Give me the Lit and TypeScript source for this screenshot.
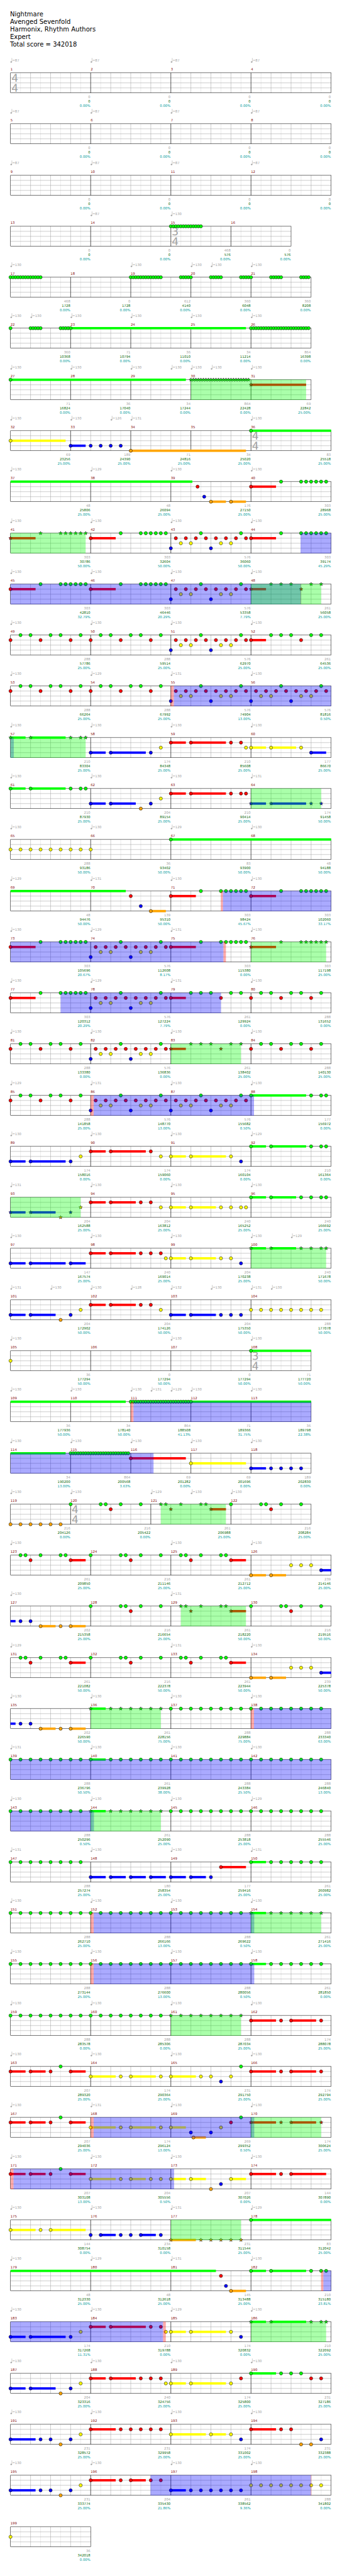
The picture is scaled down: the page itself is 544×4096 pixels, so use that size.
import { LitElement, html, svg, css, type SVGTemplateResult } from "lit";
import { customElement, property } from "lit/decorators.js";

/* ---------- chart notation ----------
 * Time is counted in eighths of a beat.
 * Measure: "[n/d] base total percent notes..."
 * Notes:   lane letter (G R Y B O), then comma-separated positions.
 *          lower case = star-power note, "=" in front = held tail only,
 *          "p~len" = sustain, "a:b:step" = a run of notes.
 */
const A = "R0~10 G12,20,22,24,26,28,30";
const B = "B0,16 Y4,8,20,24 R2:30:4 G12,28";
const C = "R0~6,20 G8,12,16,24,28";
const D = "R0,12,24 G4,8,16,20,28";
const E = "G0,12,14,20,28 R16";
const F = "G4,6,12,20,22 R8,24~6";
const H = "G0:28:4";
const I = "G0~6,8:28:4";
const J = "R0~10,12,16~10,28";
const K = "R0~6,8~6,16,24~6 G20";
const TREM = "G0,8:12,20:23";
const BLUE_RUN = "B0~6,8,12,16,20";
const star = (s: string) => s.toLowerCase();

interface Line {
  tempos: string;
  shades?: string;
  bars: string[];
}
const L = (tempos: string, shades: string, ...bars: string[]): Line => ({ tempos, shades, bars });

const EMPTY = "0 0 0.00";
const CHART: Line[] = [
  L("87 87 87 87", "", "4/4 " + EMPTY, EMPTY, EMPTY, EMPTY),
  L("87 87 87 87", "", EMPTY, EMPTY, EMPTY, EMPTY),
  L("87 87 87 87", "", EMPTY, EMPTY, EMPTY, EMPTY),
  L("- 87 130 -", "", EMPTY, EMPTY, "3/4 468 576 0.00 G0:12", "0 576 0.00"),
  L("130 - 130 130 130@80 130", "", "468 1728 0.00 G0:12", "0 1728 0.00", "612 4140 0.00 G0:12,20:23", `360 6048 0.00 ${TREM}`, `360 8208 0.00 ${TREM}`),
  L("130 130@8 130 130 130 130", "", `360 10368 0.00 ${TREM}`, "71 10794 0.00 G0~70", "36 11010 0.00", "34 11214 0.00", "864 16398 0.00 G0:23"),
  L("130 130 130 130@64 130 130@80 130", "g72-118", "71 16824 0.00 G0~70", "36 17040 0.00", "34 17244 0.00", "864 22428 0.00 g0:23", "69 22842 25.00 r0~22"),
  L("130 130 126@40 131 - 130", "", "69 23256 25.00 Y0~22", `189 24390 25.00 ${BLUE_RUN}`, "71 24816 25.00 O0~46", "34 25020 25.00", "4/4 83 25518 25.00 G0~32"),
  L("130 129 130 130", "", "48 25806 25.00 =G0~72.6", "48 26094 25.00", "176 27150 25.00 R10.67 B13.33 O16~6,24~6", `303 28968 25.00 ${A}`),
  L("130 130 130 130", "g0-30 b115.8-128", `303 30786 50.00 ${star(A)}`, `303 32604 50.00 ${A}`, `576 36060 50.00 ${B}`, `303 39174 45.29 ${A}`),
  L("130 130 130 130", "b0-116 r115.8-116 g96-124", `303 42810 32.79 ${A}`, `303 46446 20.29 ${A}`, `576 53358 7.79 ${B}`, `261 56058 25.00 ${star(C)}`),
  L("130 130 130 130", "", `288 57786 25.00 ${D}`, `288 59514 25.00 ${D}`, `576 62970 25.00 ${B}`, `261 64536 25.00 ${C}`),
  L("130 129 131 130", "r64-65.2 b65.2-128", `288 66264 25.00 ${D}`, `288 67992 25.00 ${D}`, `576 74904 13.00 ${B}`, `576 81816 0.50 ${B}`),
  L("130 130 130 130", "b0-1.3 g0-30", "210 83304 25.00 g0~6,8~14,24,28,30", "174 84348 25.00 B0~6,8~14,24 Y28", "210 85608 25.00 R0~6,8~14,24,28 Y30", "177 86670 25.00 Y0~6,8~10,20 B24~6"),
  L("130 130 130 131", "g96-124", "210 87930 25.00 G0~6,8~14,24,28,30", "204 89154 25.00 B0~6,8~10,24 O20 Y28", "210 90414 25.00 R0~6,8~14,24,28,30", "174 91458 50.00 b0~6,8~14,24,28"),
  L("130 130 129 130", "", "288 93186 50.00 Y0:28:4", "36 93402 50.00 Y0", "83 93900 50.00 G0~64", "48 94188 50.00"),
  L("129 131 130 130", "r84-84.8 b84.8-128", "48 94476 50.00 =G0~46", "139 95310 50.00 R16 B20 O24~6", `303 98424 45.67 ${A}`, `303 102060 33.17 ${A}`),
  L("130 129 131 130", "b0-85 r85-86 g96-126", `303 105696 20.67 ${A}`, `576 112608 8.17 ${B}`, `303 115380 0.00 ${A}`, `303 117198 25.00 ${star(A)}`),
  L("130 129 131 130", "b20-84", `303 120312 20.29 ${A}`, `576 127224 7.79 ${B}`, `261 129924 0.00 ${C}`, `288 131652 0.00 ${D}`),
  L("130 130 130 130", "g64-92", `288 133380 0.00 ${D}`, `576 136836 0.00 ${B}`, `261 138402 25.00 ${star(C)}`, `288 140130 25.00 ${D}`),
  L("129 131 130 130", "r32-33.2 b33.2-97.2", `288 141858 25.00 ${D}`, `576 148770 13.00 ${B}`, `576 155682 0.50 ${B}`, "177 156972 0.00 G0~22,24,28,30"),
  L("130 130 130 129", "", "174 158016 0.00 B0~6,8~14,24 Y28", "174 159060 0.00 R0~6,8~14,24 Y28", "174 160104 0.00 Y0~6,8~14,24 B28", "210 161364 0.00 G0~6,8~14,24,28,30"),
  L("131 130 130 130", "g0-28", "204 162588 25.00 b0~6,8~10,24 o20 y28", "204 163812 25.00 R0~6,8~10,20,24 Y28", "240 165252 25.00 Y0~6,8~10,20,24,28,30", "240 166692 25.00 G0~6,8~10,20,24,28,30"),
  L("130 130 130 130 129@112", "g96-126", "147 167574 25.00 B0~6,8~14,24~6", "240 169014 25.00 R0~6,8~10,20,24,28 Y30", "204 170238 25.00 Y0~6,8~10,20,24 B28", "240 171678 50.00 g0~6,8~10,20,24,28,30"),
  L("131 130@16 130 128@48 132 130@80 131 130@104", "", "204 172902 50.00 B0~6,8~10,24 O20 Y28", "204 174126 50.00 R0~6,8~10,20,24 Y28", "204 175350 50.00 B0~6,8~10,20,24,28", "288 177078 50.00 Y0:28:4"),
  L("130 - 130 130", "", "36 177294 50.00 Y0", "0 177294 50.00", "0 177294 50.00", "3/4 71 177720 50.00 G0~24"),
  L("130 130 130 131@56 129@64 130 130", "r48-49.1 b49.1-120", "36 177936 50.00 =G0~46", "34 178140 50.00", "864 188508 41.13 G0:23", "71 189366 31.75 G0~48", "36 189798 22.38"),
  L("130 130 130 130 130", "b0-57.1", "34 190200 13.00 =G0~22", "864 200568 3.63 G0:23", "69 201282 0.00 R0~22", "69 201696 0.00 Y0~22", `189 202830 0.00 ${BLUE_RUN}`),
  L("130 130 129 130@72 130", "g60-86", "216 204126 0.00 O0:20:4", `4/4 216 205422 0.00 ${E}`, `261 206988 25.00 ${star(F)}`, `216 208284 25.00 ${E}`),
  L("130 - 130 130", "", `261 209850 25.00 ${F}`, `216 211146 25.00 ${E}`, `261 212712 25.00 ${F}`, "239 214146 25.00 O0~6,8~6 Y16,20,24 B28~4"),
  L("130 - 131 -", "g68-94", "202 215358 25.00 =B0~2 B4,8 O12~6,20,24~6", `216 216654 25.00 ${E}`, `261 218220 50.00 ${star(F)}`, `216 219516 50.00 ${E}`),
  L("129 - 131 130", "", `261 221082 50.00 ${F}`, `216 222378 50.00 ${E}`, `261 223944 50.00 ${F}`, "239 225378 50.00 O0~6,8~6 Y16,20,24 B28~4"),
  L("130 130 130 130", "g32-60 r96-97.2 b97.2-128", "202 226590 50.00 =B0~2 B4,8 O12~6,20,24~6", `261 228156 75.00 ${star(I)}`, `288 229884 75.00 ${H}`, `288 233340 63.00 ${H}`),
  L("131 130 130 130", "b0-128", `288 236796 50.50 ${H}`, `261 239928 38.00 ${I}`, `288 243384 25.50 ${H}`, `288 246840 13.00 ${H}`),
  L("130 130 130 129", "b0-33.3 g32-60", `288 250296 0.50 ${H}`, `261 252090 25.00 ${star(I)}`, `288 253818 25.00 ${H}`, `288 255546 25.00 ${H}`),
  L("131 130 130 131", "", `288 257274 25.00 ${H}`, "180 258354 25.00 B0~6,8~6,16~6,24~6", "177 259416 25.00 B0~6,8~6,16 R20~10", `261 260982 25.00 ${I}`),
  L("130 130 130 130", "r32-33.2 b33.2-97.3 g96-124", `288 262710 25.00 ${H}`, `288 266166 13.00 ${H}`, `288 269622 0.50 ${H}`, `261 271416 25.00 ${star(I)}`),
  L("130 130 130 130", "r32-33.2 b33.2-97.3", `288 273144 25.00 ${H}`, `288 276600 13.00 ${H}`, `288 280056 0.50 ${H}`, `261 281850 0.00 ${I}`),
  L("130 130 130 130", "g64-92", `288 283578 0.00 ${H}`, `288 285306 0.00 ${H}`, `288 287034 25.00 ${star(H)}`, `174 288078 25.00 ${J}`),
  L("130 130 130 130", "", `207 289320 25.00 ${K}`, "174 290364 25.00 Y0~10,12,16~10,28", "231 291750 25.00 Y0~10,12,16,24 B20 G28", `174 292794 25.00 ${J}`),
  L("130 131 130 130", "r32-33.2 b33.2-97.3 g96-124", `207 294036 25.00 ${K}`, "174 296124 13.00 Y0~10,12,16~10,28", "269 299352 0.50 Y0~6,20 B8,16 O9~5 R24 G28", `174 300624 25.00 ${star(J)}`),
  L("130 130 130 130", "r0-1.2 b1.2-65.3", `207 303108 13.00 ${K}`, "204 305556 0.50 Y0~10,12,16~6,24,28", "207 307026 0.00 Y0~6,8~6,24~6 B20 O16", "144 307890 0.00 R0~10,12,16~14"),
  L("130 130 131 129", "g64-92", "144 308754 0.00 Y0~10,12,16~14", "234 310158 0.00 B0,4~6,12,16,20~6,28", "231 311544 25.00 o0~10,12:28:4", "83 312042 25.00 G0~32"),
  L("130 129 131 130", "r124-124.9 b124.9-128", "48 312330 25.00 =G0~82", "48 312618 25.00", "145 313488 25.00 R20 B22 O24~6", "210 315180 23.81 G0~6,8~14,24,28,30"),
  L("130 130 129 130", "b0-60.9 r60.9-62 g96-126", "174 317268 11.31 B0~6,8~14,24 Y28", "210 319788 0.00 R0~6,8~14,24,28 Y30", "174 320832 0.00 Y0~6,8~14,24 B28", "210 322092 25.00 g0~6,8~14,24,28,30"),
  L("130 130 130 130", "", "204 323316 25.00 B0~6,8~10,24 O20 Y28", "240 324756 25.00 R0~6,8~10,20,24,28 Y30", "174 325800 25.00 Y0~6,8~14,24 R28", "231 327186 25.00 G0~10,12,16,20 R24,28"),
  L("130 130 130 130", "", "231 328572 25.00 B0~10,12,16,24 O20 Y28", "231 329958 25.00 R0~10,12:28:4", "174 331002 25.00 Y0~14,16~6,24 B28", "231 332388 25.00 R0~10,12,16 O20,24 B28"),
  L("130 130 130 130", "b55.9-119.9 r119.9-120.1", "231 333774 25.00 B0~10,12,16,24 O20 Y28", "204 335430 21.86 R0~10,12,16~6,24,28", "261 338562 9.36 B0~6,8:28:4", "288 341802 0.00 Y0:28:4"),
  L("-", "", "36 342018 0.00 Y0"),
];

/* ---------- parsing ---------- */
interface Note {
  lane: number;
  at: number;
  len: number;
  star: boolean;
  head: boolean;
}
interface Bar {
  number: number;
  start: number;
  width: number;
  signature: string;
  base: string;
  total: string;
  percent: string;
  notes: Note[];
}
interface System {
  bars: Bar[];
  width: number;
  tempos: { at: number; bpm: string }[];
  shades: { kind: string; from: number; to: number }[];
}

const LANES = "GRYBO";

function parseNotes(tokens: string[]): Note[] {
  const notes: Note[] = [];
  for (const token of tokens) {
    const head = token[0] !== "=";
    const body = head ? token : token.slice(1);
    const lane = LANES.indexOf(body[0].toUpperCase());
    const isStar = body[0] !== body[0].toUpperCase();
    for (const part of body.slice(1).split(",")) {
      if (part.includes(":")) {
        const [from, to, step = 1] = part.split(":").map(Number);
        for (let at = from; at <= to; at += step) notes.push({ lane, at, len: 0, star: isStar, head });
      } else {
        const [at, len = 0] = part.split("~").map(Number);
        notes.push({ lane, at, len, star: isStar, head });
      }
    }
  }
  return notes;
}

function parseChart(lines: Line[]): System[] {
  let number = 0;
  let width = 32;
  return lines.map((line) => {
    let start = 0;
    const bars = line.bars.map((source): Bar => {
      const tokens = source.split(" ");
      const signature = tokens[0].includes("/") ? tokens.shift()! : "";
      if (signature) width = Number(signature[0]) * 8;
      const [base, total, percent, ...notes] = tokens;
      const bar = { number: ++number, start, width, signature, base, total, percent: `${percent}%`, notes: parseNotes(notes) };
      start += width;
      return bar;
    });
    let next = 0;
    const tempos: System["tempos"] = [];
    for (const token of line.tempos.split(" ")) {
      const [bpm, at] = token.split("@");
      if (at !== undefined) tempos.push({ at: Number(at), bpm });
      else {
        if (bpm !== "-") tempos.push({ at: bars[next].start, bpm });
        next++;
      }
    }
    const shades = (line.shades ?? "").split(" ").filter(Boolean).map((s) => {
      const [from, to] = s.slice(1).split("-").map(Number);
      return { kind: s[0], from, to };
    });
    return { bars, width: start, tempos, shades };
  });
}

/* ---------- drawing ---------- */
const UNIT = 7.5;
const LEFT = 31.5;
const TOP = 50.5;
const GAP = 15;
const px = (u: number) => LEFT + u * UNIT;
const laneY = (lane: number) => TOP + lane * GAP;

const STAR = Array.from({ length: 10 }, (_, i) => {
  const r = i % 2 ? 2.2 : 5.5;
  const a = (i * Math.PI) / 5 - Math.PI / 2;
  return `${(r * Math.cos(a)).toFixed(2)},${(r * Math.sin(a)).toFixed(2)}`;
}).join(" ");

@customElement("staff-system")
export class StaffSystem extends LitElement {
  @property({ attribute: false }) system!: System;

  static styles = css`
    :host {
      display: block;
    }
    .staff {
      display: block;
      width: 100%;
      overflow: visible;
      font-family: "DejaVu Sans", sans-serif;
      font-size: 10px;
      text-rendering: geometricPrecision;
    }
    .string, .beat, .half, .bar, .frame {
      fill: none;
      stroke-width: 1;
    }
    .string, .beat { stroke: #a0a0a0; }
    .half { stroke: #dcdcdc; }
    .bar, .frame { stroke: #000; }
    .number { fill: #800000; }
    .tempo { fill: #a0a0a0; }
    .stem { stroke: #a0a0a0; stroke-width: 1; }
    .signature { fill: #a0a0a0; font-size: 32px; }
    .base, .total, .percent { text-anchor: end; }
    .base { fill: #a0a0a0; }
    .total { fill: #006400; }
    .percent { fill: #009c9c; }
    .head { stroke: #000; stroke-width: 1; }
    .lane0 { fill: #00ff00; }
    .lane1 { fill: #ff0000; }
    .lane2 { fill: #ffff00; }
    .lane3 { fill: #0000ff; }
    .lane4 { fill: #ffa500; }
    .shade { fill-opacity: 0.333; }
    .g { fill: #00ff00; }
    .r { fill: #ff0000; }
    .b { fill: #0000ff; }
  `;

  private grid(): SVGTemplateResult[] {
    const { width, bars } = this.system;
    const lines: SVGTemplateResult[] = [];
    for (let u = 4; u < width; u += 8) lines.push(svg`<path class="half" d="M${px(u)} ${TOP}v60"/>`);
    for (let u = 8; u < width; u += 8) lines.push(svg`<path class="beat" d="M${px(u)} ${TOP}v60"/>`);
    for (let i = 1; i < 4; i++) lines.push(svg`<path class="string" d="M${LEFT} ${laneY(i)}h${width * UNIT}"/>`);
    lines.push(svg`<rect class="frame" x=${LEFT} y=${TOP} width=${width * UNIT} height="60"/>`);
    for (const bar of bars.slice(1)) lines.push(svg`<path class="bar" d="M${px(bar.start)} ${TOP}v60"/>`);
    return lines;
  }

  private labels(bar: Bar): SVGTemplateResult {
    const x = px(bar.start);
    const end = px(bar.start + bar.width) - 1;
    const [beats, unit] = bar.signature.split("/");
    return svg`
      <text class="number" x=${x} y="43">${bar.number}</text>
      ${bar.signature
        ? svg`<text class="signature" x=${x + 3} y="78">${beats}</text>
              <text class="signature" x=${x + 3} y="108">${unit}</text>`
        : ""}
      <text class="base" x=${end} y="126">${bar.base}</text>
      <text class="total" x=${end} y="139">${bar.total}</text>
      <text class="percent" x=${end} y="152">${bar.percent}</text>`;
  }

  render() {
    const { bars, width, tempos, shades } = this.system;
    const notes = bars.flatMap((bar) => bar.notes.map((n) => ({ ...n, at: n.at + bar.start })));
    return html`<svg class="staff" viewBox="0 0 1024 153">
      ${this.grid()}
      ${tempos.map(({ at, bpm }) => svg`
        <ellipse class="tempo" cx=${px(at) + 2} cy="18" rx="2.5" ry="2"/>
        <path class="stem" d="M${px(at) + 4} 6v12"/>
        <text class="tempo" x=${px(at) + 5} y="17">=${bpm}</text>`)}
      ${bars.map((bar) => this.labels(bar))}
      ${notes.filter((n) => n.len > 0).map((n) => svg`
        <rect class="lane${n.lane}" x=${px(n.at)} y=${laneY(n.lane) - 3.5}
          width=${(Math.min(n.at + n.len, width) - n.at) * UNIT} height="7"/>`)}
      ${notes.filter((n) => n.head).map((n) => n.star
        ? svg`<polygon class="head lane${n.lane}" points=${STAR}
            transform="translate(${px(n.at)} ${laneY(n.lane)})"/>`
        : svg`<circle class="head lane${n.lane}" cx=${px(n.at)} cy=${laneY(n.lane)} r="4.8"/>`)}
      ${shades.map((s) => svg`
        <rect class="shade ${s.kind}" x=${px(s.from)} y=${TOP - 0.5}
          width=${(s.to - s.from) * UNIT} height="61"/>`)}
    </svg>`;
  }
}

@customElement("app-root")
export class AppRoot extends LitElement {
  private readonly systems = parseChart(CHART);

  static styles = css`
    :host {
      display: block;
      background: #fff;
      color: #000;
      font-family: "DejaVu Sans", sans-serif;
    }
    .title-block {
      padding: 17px 16px 12px;
    }
    .title, .line {
      margin: 0;
      font-size: 10px;
      line-height: 12px;
      font-weight: 400;
    }
    .chart {
      display: flex;
      flex-direction: column;
      padding-bottom: 24px;
    }
  `;

  render() {
    return html`
      <header class="title-block">
        <h1 class="title">Nightmare</h1>
        <p class="line">Avenged Sevenfold</p>
        <p class="line">Harmonix, Rhythm Authors</p>
        <p class="line">Expert</p>
        <p class="line">Total score = 342018</p>
      </header>
      <main class="chart">
        ${this.systems.map((system) => html`<staff-system .system=${system}></staff-system>`)}
      </main>
    `;
  }
}
